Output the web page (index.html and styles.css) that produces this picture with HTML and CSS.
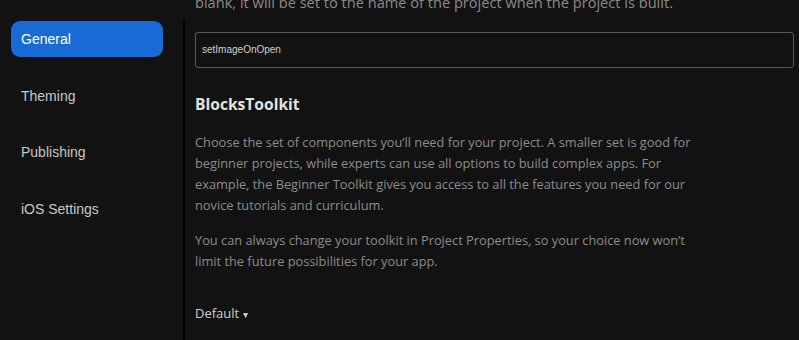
FILE: index.html
```html
<!DOCTYPE html>
<html lang="en">
<head>
  <meta charset="UTF-8">
  <title>Project Properties</title>
  <link rel="stylesheet" href="styles.css">
</head>
<body>
  <div class="layout">
    <nav class="sidebar">
      <a class="tab active">General</a>
      <a class="tab">Theming</a>
      <a class="tab">Publishing</a>
      <a class="tab">iOS Settings</a>
    </nav>
    <div class="divider"></div>
    <main class="content">
      <p class="note">blank, it will be set to the name of the project when the project is built.</p>
      <div class="field">setImageOnOpen</div>
      <h2>BlocksToolkit</h2>
      <p class="desc">Choose the set of components you’ll need for your project. A smaller set is good for beginner projects, while experts can use all options to build complex apps. For example, the Beginner Toolkit gives you access to all the features you need for our novice tutorials and curriculum.</p>
      <p class="desc">You can always change your toolkit in Project Properties, so your choice now won’t limit the future possibilities for your app.</p>
      <div class="dropdown">Default <span class="caret">▾</span></div>
    </main>
  </div>
</body>
</html>
```
FILE: styles.css
```css
*{
    margin: 0;
    padding: 0;
    box-sizing: border-box;
}

body{
    background: #121212;
    width: 799px;
    height: 340px;
    overflow: hidden;
    font-family: "Liberation Sans", Arial, sans-serif;
}

.layout{
    display: flex;
    height: 340px;
}

.sidebar{
    width: 183px;
    flex-shrink: 0;
    padding: 21px 20px 0 11px;
    display: flex;
    flex-direction: column;
    gap: 20.5px;
}

.tab{
    display: block;
    height: 36px;
    line-height: 36px;
    padding-left: 10px;
    border-radius: 9px;
    font-size: 14px;
    color: #c8c8c8;
}

.tab.active{
    background: #1a6ad6;
    color: #fff;
}

.divider{
    width: 2px;
    margin-top: 19px;
    background: #000;
    flex-shrink: 0;
}

.content{
    flex: 1;
    padding: 0 5px 0 10px;
    overflow: hidden;
    font-family: "Open Sans", sans-serif;
}

.note{
    margin-top: -6px;
    font-size: 14.6px;
    line-height: 16px;
    color: #8a8a8a;
    white-space: nowrap;
}

.field{
    margin-top: 22px;
    height: 36px;
    border: 1px solid #5a5a5a;
    border-radius: 3px;
    padding-left: 6px;
    line-height: 34px;
    font-family: "Liberation Sans", Arial, sans-serif;
    font-size: 10px;
    color: #cfcfcf;
}

h2{
    margin-top: 25px;
    font-size: 15.6px;
    font-weight: 700;
    line-height: 22px;
    color: #e2e2e2;
}

.desc{
    max-width: 510px;
    margin-top: 17px;
    font-size: 12.8px;
    line-height: 21px;
    color: #8c8c8c;
}

.desc + .desc{
    margin-top: 14px;
}

.dropdown{
    margin-top: 32px;
    font-size: 13px;
    color: #cfcfcf;
}

.caret{
    font-size: 10px;
}
```
